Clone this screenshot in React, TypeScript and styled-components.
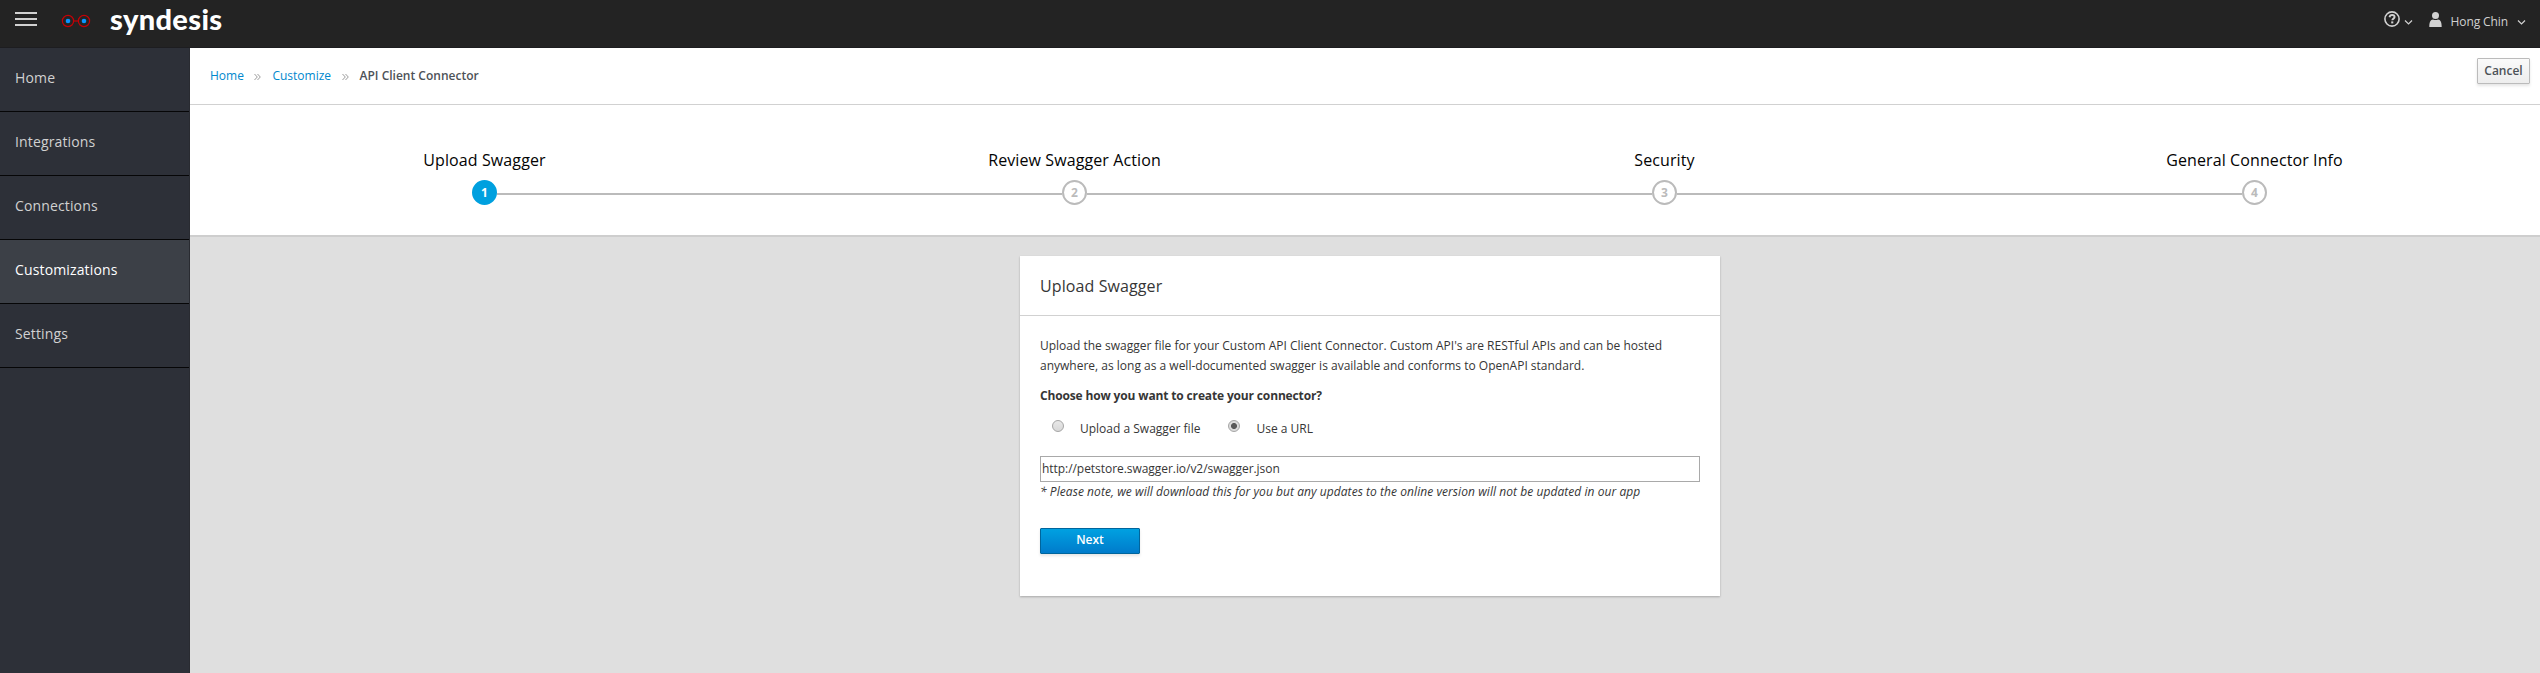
import React from "react";
import styled, { createGlobalStyle } from "styled-components";

const GlobalStyle = createGlobalStyle`
  * { box-sizing: border-box; }
  html, body { margin: 0; padding: 0; }
  body {
    font-family: "Open Sans", "Liberation Sans", sans-serif;
    font-size: 12px;
    line-height: 20px;
    color: #363636;
    background: #dfdfdf;
    overflow: hidden;
  }
`;

const Page = styled.div`
  display: flex;
  flex-direction: column;
  height: 100vh;
  overflow: hidden;
`;

const Masthead = styled.header`
  display: flex;
  justify-content: space-between;
  align-items: flex-start;
  height: 48px;
  flex: none;
  background: #232323;
  border-bottom: 1px solid #1d1d20;
`;

const Brand = styled.div`
  display: flex;
  align-items: flex-start;
`;

const MenuToggle = styled.button`
  display: flex;
  flex-direction: column;
  justify-content: space-between;
  width: 22px;
  height: 14px;
  margin: 12px 0 0 15px;
  padding: 0;
  border: 0;
  background: none;
`;

const ToggleBar = styled.span`
  height: 2px;
  background: #d1d1d1;
`;

const Glasses = styled.svg`
  margin: 14px 0 0 24px;
`;

const BrandName = styled.span`
  margin: 4px 0 0 19px;
  font-family: Lato, "Open Sans", sans-serif;
  font-weight: 900;
  font-size: 29px;
  line-height: 29px;
  letter-spacing: 0.35px;
  color: #fff;
`;

const Utilities = styled.nav`
  display: flex;
  align-items: flex-start;
  padding-right: 14px;
  color: #d1d1d1;
`;

const HelpIcon = styled.svg`
  margin: 11px 4px 0 0;
`;

const UserIcon = styled.svg`
  margin: 12px 9px 0 16px;
`;

const UserName = styled.span`
  margin: 12px 9px 0 0;
  letter-spacing: -0.1px;
`;

const Caret = styled.svg`
  margin: 19px 0 0;
`;

const Shell = styled.div`
  display: flex;
  flex: 1;
  min-height: 0;
`;

const Sidebar = styled.nav`
  width: 190px;
  flex: none;
  background: #2d3038;
  border-right: 1px solid #292b31;
`;

const NavItem = styled.a<{ $active?: boolean }>`
  display: flex;
  align-items: flex-start;
  height: 64px;
  padding: 19px 0 0 15px;
  font-size: 14px;
  line-height: 22px;
  letter-spacing: 0.14px;
  color: ${(p) => (p.$active ? "#fff" : "#d1d1d1")};
  background: ${(p) => (p.$active ? "#3c4047" : "transparent")};
  border-bottom: 1px solid #060607;
`;

const Main = styled.main`
  flex: 1;
  min-width: 0;
  display: flex;
  flex-direction: column;
`;

const CrumbBar = styled.div`
  display: flex;
  justify-content: space-between;
  align-items: flex-start;
  height: 57px;
  padding: 0 10px 0 20px;
  background: #fff;
  border-bottom: 1px solid #d1d1d1;
`;

const Crumbs = styled.div`
  display: flex;
  align-items: center;
  margin-top: 18px;
`;

const CrumbLink = styled.a`
  color: #0088ce;
`;

const CrumbCurrent = styled.span`
  font-weight: 600;
  color: #4d5258;
`;

const Separator = styled.svg`
  margin: 1px 11px 0 10.5px;
`;

const Button = styled.button<{ $primary?: boolean }>`
  height: 26px;
  padding: 0 6px 2px;
  font: 600 12px/20px "Open Sans", sans-serif;
  border-radius: 1px;
  box-shadow: 0 2px 3px rgba(3, 3, 3, 0.1);
  color: ${(p) => (p.$primary ? "#fff" : "#4d5258")};
  border: 1px solid ${(p) => (p.$primary ? "#00659c" : "#bbb")};
  background: ${(p) =>
    p.$primary
      ? "linear-gradient(to bottom, #00a1e1 0%, #007bcb 100%)"
      : "linear-gradient(to bottom, #fafafa 0%, #ededed 100%)"};
`;

const CancelButton = styled(Button)`
  width: 53px;
  margin-top: 10px;
  padding-bottom: 0;
`;

const NextButton = styled(Button)`
  width: 100px;
  margin-top: 26px;
`;

const Steps = styled.ol`
  display: flex;
  list-style: none;
  height: 132px;
  margin: 0;
  padding: 43px 0 0;
  background: #fff;
  border-bottom: 2px solid #cecece;
`;

const Step = styled.li`
  flex: 0 0 590px;
  display: flex;
  flex-direction: column;
  align-items: center;
  font-size: 16px;
  line-height: 24px;
  letter-spacing: 0.1px;
  color: #030303;

  &:first-child {
    margin-left: -0.5px;
  }
`;

const Track = styled.div`
  display: flex;
  align-items: center;
  align-self: stretch;
  margin-top: 8px;
`;

const Rail = styled.span<{ $hidden?: boolean }>`
  flex: 1;
  height: 2px;
  margin-top: 3px;
  background: ${(p) => (p.$hidden ? "transparent" : "#bbb")};
`;

const StepNumber = styled.span<{ $active?: boolean }>`
  width: 25px;
  height: 25px;
  border-radius: 50%;
  border: 2px solid ${(p) => (p.$active ? "#00a0df" : "#bbb")};
  background: ${(p) => (p.$active ? "#00a0df" : "#fff")};
  color: ${(p) => (p.$active ? "#fff" : "#bbb")};
  font-size: 12px;
  font-weight: 700;
  line-height: 21px;
  text-align: center;
`;

const Card = styled.section`
  align-self: center;
  width: 700px;
  height: 340px;
  margin: 19px 0 0 10px;
  background: #fff;
  box-shadow: 0 1px 2px rgba(3, 3, 3, 0.25);
`;

const CardTitle = styled.h2`
  height: 60px;
  margin: 0;
  padding: 20px 20px 0;
  font-size: 16px;
  font-weight: 400;
  line-height: 20px;
  letter-spacing: 0.1px;
  border-bottom: 1px solid #d1d1d1;
`;

const CardBody = styled.div`
  display: flex;
  flex-direction: column;
  align-items: flex-start;
  padding: 20px;
`;

const Text = styled.p`
  margin: 0 0 10px;
`;

const Question = styled.strong`
  font-weight: 700;
  letter-spacing: -0.15px;
`;

const Options = styled.div`
  display: flex;
  align-items: flex-start;
  height: 50px;
  padding: 13px 0 0 12px;
`;

const Radio = styled.span<{ $checked?: boolean }>`
  width: 12px;
  height: 12px;
  margin-top: 1px;
  border-radius: 50%;
  border: 1px solid #a5a5a5;
  background: ${(p) =>
    p.$checked
      ? "radial-gradient(circle, #5a5a5a 0 2.6px, #dcdcdc 3.4px)"
      : "linear-gradient(#e8e8e8, #d8d8d8)"};
`;

const OptionLabel = styled.label`
  margin: 0 28px 0 16px;
`;

const UrlInput = styled.input`
  width: 660px;
  height: 26px;
  padding: 0 1px 1px;
  font: 12px "Open Sans", sans-serif;
  letter-spacing: -0.05px;
  color: #363636;
  background: #fff;
  border: 1px solid #a9a9a9;
  border-radius: 0;
`;

const Note = styled.em`
  display: block;
  letter-spacing: 0.06px;
`;

const CaretDown = () => (
  <Caret width="9" height="7" viewBox="0 0 9 7" fill="none" stroke="currentColor" strokeWidth="1.2">
    <path d="M1 1.5 4.5 5 8 1.5" />
  </Caret>
);

const CrumbSeparator = () => (
  <Separator width="7" height="8" viewBox="0 0 7 8" fill="none" stroke="#9c9c9c" strokeWidth="1">
    <path d="M0.5 1 3.3 4 0.5 7M3.5 1 6.3 4 3.5 7" />
  </Separator>
);

const navItems = ["Home", "Integrations", "Connections", "Customizations", "Settings"];
const steps = ["Upload Swagger", "Review Swagger Action", "Security", "General Connector Info"];

export default function App() {
  return (
    <Page>
      <GlobalStyle />
      <Masthead>
        <Brand>
          <MenuToggle aria-label="Toggle navigation">
            <ToggleBar />
            <ToggleBar />
            <ToggleBar />
          </MenuToggle>
          <Glasses width="30" height="14" viewBox="0 0 30 14">
            <g fill="none" stroke="#c40006" strokeWidth="1.2">
              <circle cx="7" cy="7" r="5.6" />
              <circle cx="23" cy="7" r="5.6" />
              <path d="M12.6 7H17.4" />
            </g>
            <circle cx="7" cy="7" r="2.3" fill="#0a94ff" />
            <circle cx="23" cy="7" r="2.3" fill="#0a94ff" />
          </Glasses>
          <BrandName>syndesis</BrandName>
        </Brand>
        <Utilities>
          <HelpIcon width="16" height="16" viewBox="0 0 16 16" fill="none" stroke="currentColor">
            <circle cx="8" cy="8" r="7.1" strokeWidth="1.6" />
            <path d="M5.5 6.2C5.8 4.7 6.7 4 8.1 4c1.5 0 2.5.8 2.5 2.1C10.6 7.6 8.3 7.7 8.3 9.3" strokeWidth="1.9" />
            <path d="M7.2 11.4h2.1" strokeWidth="2" />
          </HelpIcon>
          <CaretDown />
          <UserIcon width="13" height="15" viewBox="0 0 13 15" fill="currentColor">
            <circle cx="6.5" cy="3.5" r="3.5" />
            <path d="M0.3 15C0.3 10 1.5 7.8 4 7.5 5.5 8.3 7.5 8.3 9 7.5 11.5 7.8 12.7 10 12.7 15Z" />
          </UserIcon>
          <UserName>Hong Chin</UserName>
          <CaretDown />
        </Utilities>
      </Masthead>
      <Shell>
        <Sidebar>
          {navItems.map((item) => (
            <NavItem key={item} $active={item === "Customizations"}>
              {item}
            </NavItem>
          ))}
        </Sidebar>
        <Main>
          <CrumbBar>
            <Crumbs>
              <CrumbLink>Home</CrumbLink>
              <CrumbSeparator />
              <CrumbLink>Customize</CrumbLink>
              <CrumbSeparator />
              <CrumbCurrent>API Client Connector</CrumbCurrent>
            </Crumbs>
            <CancelButton>Cancel</CancelButton>
          </CrumbBar>
          <Steps>
            {steps.map((label, i) => (
              <Step key={label}>
                {label}
                <Track>
                  <Rail $hidden={i === 0} />
                  <StepNumber $active={i === 0}>{i + 1}</StepNumber>
                  <Rail $hidden={i === steps.length - 1} />
                </Track>
              </Step>
            ))}
          </Steps>
          <Card>
            <CardTitle>Upload Swagger</CardTitle>
            <CardBody>
              <Text>
                Upload the swagger file for your Custom API Client Connector. Custom API's are RESTful APIs and can be hosted
                anywhere, as long as a well-documented swagger is available and conforms to OpenAPI standard.
              </Text>
              <Question>Choose how you want to create your connector?</Question>
              <Options>
                <Radio />
                <OptionLabel>Upload a Swagger file</OptionLabel>
                <Radio $checked />
                <OptionLabel>Use a URL</OptionLabel>
              </Options>
              <UrlInput defaultValue="http://petstore.swagger.io/v2/swagger.json" />
              <Note>* Please note, we will download this for you but any updates to the online version will not be updated in our app</Note>
              <NextButton $primary>Next</NextButton>
            </CardBody>
          </Card>
        </Main>
      </Shell>
    </Page>
  );
}
